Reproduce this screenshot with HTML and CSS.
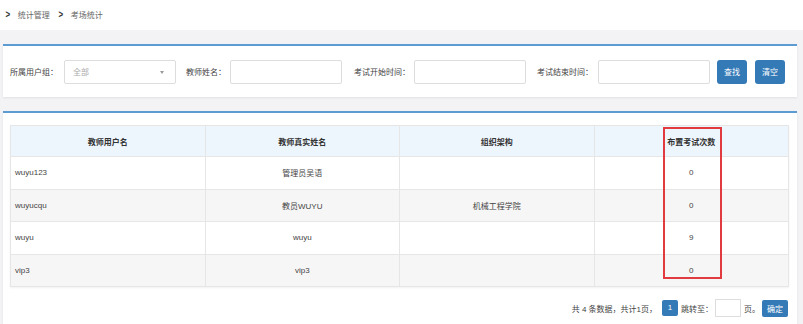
FILE: index.html
```html
<!DOCTYPE html>
<html>
<head>
  <meta charset="UTF-8">
  <title>考场统计</title>
  <link rel="stylesheet" href="styles.css">
</head>
<body>
  <!-- Breadcrumb -->
  <div class="crumb">
    <span class="arrow">&gt;</span><span>统计管理</span>
    <span class="arrow">&gt;</span><span>考场统计</span>
  </div>

  <div class="main">
    <!-- Search panel -->
    <div class="panel filter">
      <label class="lbl">所属用户组：</label>
      <div class="select"><span>全部</span><i class="caret"></i></div>
      <label class="lbl l2">教师姓名：</label>
      <input class="txt" type="text">
      <label class="lbl l3">考试开始时间：</label>
      <input class="txt" type="text">
      <label class="lbl l4">考试结束时间：</label>
      <input class="txt" type="text">
      <button class="btn">查找</button>
      <button class="btn">清空</button>
    </div>

    <!-- Result panel -->
    <div class="panel list">
      <div class="table-wrap">
        <table class="grid">
          <thead>
            <tr><th>教师用户名</th><th>教师真实姓名</th><th>组织架构</th><th>布置考试次数</th></tr>
          </thead>
          <tbody>
            <tr><td class="left">wuyu123</td><td>管理员吴语</td><td></td><td>0</td></tr>
            <tr><td class="left">wuyucqu</td><td>教员WUYU</td><td>机械工程学院</td><td>0</td></tr>
            <tr><td class="left">wuyu</td><td>wuyu</td><td></td><td>9</td></tr>
            <tr><td class="left">vip3</td><td>vip3</td><td></td><td>0</td></tr>
          </tbody>
        </table>
        <div class="mark"></div>
      </div>

      <div class="pager">
        <span>共 4 条数据，共计1页，</span>
        <span class="page-no">1</span>
        <span>跳转至：</span>
        <input class="jump" type="text">
        <span>页。</span>
        <button class="btn small">确定</button>
      </div>
    </div>
  </div>
</body>
</html>
```

FILE: styles.css
```css
/* Page */
body {
  margin: 0;
  height: 324px;
  overflow: hidden;
  background-color: #f3f3f5;
  font-family: "Liberation Sans", "Noto Sans CJK SC", sans-serif;
  font-size: 8px;
  color: #555;
}

/* Breadcrumb */
.crumb {
  height: 30px;
  background-color: #fff;
  display: flex;
  align-items: center;
  padding-left: 5px;
  padding-bottom: 2px;
  box-sizing: border-box;
  color: #666;
}

.crumb .arrow {
  font-size: 10px;
  font-weight: bold;
  color: #333;
  margin-right: 7px;
  transform: scaleX(0.8);
}

.crumb span + .arrow {
  margin-left: 8px;
}

.main {
  padding: 14px 6px 0 3px;
}

/* Panels */
.panel {
  background-color: #fff;
  border-top: 2px solid #5d9cd3;
  box-shadow: 0 1px 2px rgba(0, 0, 0, 0.08);
}

.filter {
  height: 51px;
  display: flex;
  align-items: center;
  padding: 0 7px;
  color: #444;
}

.filter > * {
  flex-shrink: 0;
  white-space: nowrap;
}

.lbl {
  margin-right: 6px;
}

.l2 { margin-left: 10px; margin-right: 4px; }
.l3 { margin-left: 12px; margin-right: 4px; }
.l4 { margin-left: 11px; margin-right: 5px; }

.select, .txt {
  width: 112px;
  height: 24px;
  box-sizing: border-box;
  border: 1px solid #ddd;
  border-radius: 2px;
  background: #fff;
}

.select {
  position: relative;
  display: flex;
  align-items: center;
  padding-left: 8px;
  color: #aaa;
}

.caret {
  position: absolute;
  right: 11px;
  top: 10px;
  border-left: 2.5px solid transparent;
  border-right: 2.5px solid transparent;
  border-top: 3px solid #999;
}

.txt {
  margin: 0;
}

.btn {
  height: 24px;
  width: 30px;
  padding: 0;
  border: none;
  border-radius: 3px;
  background-color: #337ab7;
  color: #fff;
  font-family: inherit;
  font-size: 8px;
  margin-left: 7px;
}

.btn + .btn {
  margin-left: 8px;
}

.list {
  margin-top: 14px;
  height: 199px;
  padding: 12px 8px 0 7px;
}

/* Table */
.table-wrap {
  position: relative;
}

.grid {
  width: 100%;
  border-collapse: collapse;
  table-layout: fixed;
  box-shadow: 0 1px 2px rgba(0, 0, 0, 0.06);
}

.grid th, .grid td {
  border: 1px solid #e6e6e6;
  text-align: center;
  padding: 0 4px;
}

.grid th {
  height: 30px;
  background-color: #eef6fd;
  color: #333;
  font-weight: bold;
}

.grid td {
  height: 31.5px;
  color: #444;
}

.grid tbody tr:nth-child(even) td {
  background-color: #f6f6f6;
}

.grid td.left {
  text-align: left;
}

/* red highlight frame */
.mark {
  position: absolute;
  left: 653px;
  top: 2px;
  width: 59px;
  height: 152px;
  box-sizing: border-box;
  border: 2px solid #e23b3f;
}

/* Pagination */
.pager {
  display: flex;
  justify-content: flex-end;
  align-items: center;
  margin-top: 12px;
  margin-right: 1px;
  color: #444;
}

.page-no {
  width: 16px;
  height: 16px;
  line-height: 16px;
  text-align: center;
  background-color: #337ab7;
  color: #fff;
  border-radius: 2px;
  margin: 0 3px 0 5px;
}

.jump {
  width: 26px;
  height: 18px;
  box-sizing: border-box;
  border: 1px solid #ddd;
  margin: 0 3px 0 2px;
}

.btn.small {
  width: 26px;
  height: 17px;
  margin-left: 2px;
  border-radius: 2px;
}
```
